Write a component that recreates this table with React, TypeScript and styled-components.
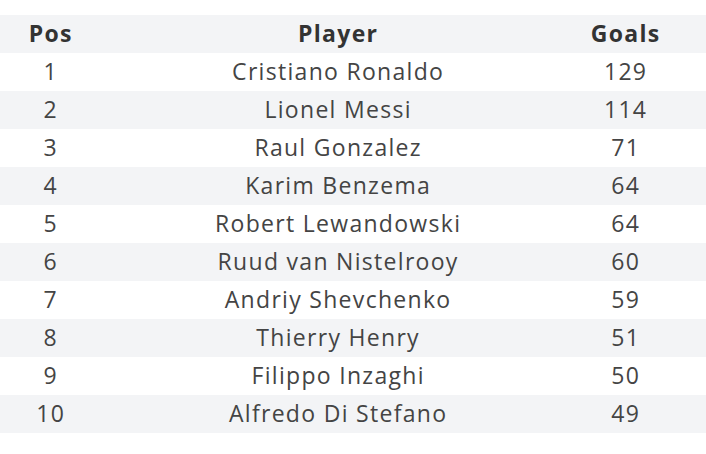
import React from "react";
import styled, { createGlobalStyle } from "styled-components";

const Global = createGlobalStyle`
  html, body { margin: 0; padding: 0; background: #ffffff; }
  body { font-family: "Open Sans", "Liberation Sans", sans-serif; }
`;

const Page = styled.div`
  padding-top: 15px;
  width: 706px;
`;

const Table = styled.div`
  display: flex;
  flex-direction: column;
`;

const Row = styled.div<{ $shade: boolean }>`
  display: grid;
  grid-template-columns: 100px 475px 100px 1fr;
  height: 38px;
  align-items: center;
  background: ${(p) => (p.$shade ? "#f3f4f6" : "#ffffff")};
`;

const Cell = styled.div<{ $head?: boolean }>`
  text-align: center;
  font-size: 23px;
  line-height: 36px;
  padding-bottom: 2px;
  padding-left: 1.3px;
  letter-spacing: 1.3px;
  white-space: nowrap;
  color: ${(p) => (p.$head ? "#333333" : "#444444")};
  font-weight: ${(p) => (p.$head ? 700 : 400)};
`;

const data: [number, string, number][] = [
  [1, "Cristiano Ronaldo", 129],
  [2, "Lionel Messi", 114],
  [3, "Raul Gonzalez", 71],
  [4, "Karim Benzema", 64],
  [5, "Robert Lewandowski", 64],
  [6, "Ruud van Nistelrooy", 60],
  [7, "Andriy Shevchenko", 59],
  [8, "Thierry Henry", 51],
  [9, "Filippo Inzaghi", 50],
  [10, "Alfredo Di Stefano", 49],
];

export default function App() {
  return (
    <>
      <Global />
      <Page>
        <Table>
          <Row $shade>
            <Cell $head>Pos</Cell>
            <Cell $head>Player</Cell>
            <Cell $head>Goals</Cell>
            <span />
          </Row>
          {data.map(([pos, name, goals], i) => (
            <Row key={pos} $shade={i % 2 === 1}>
              <Cell>{pos}</Cell>
              <Cell>{name}</Cell>
              <Cell>{goals}</Cell>
              <span />
            </Row>
          ))}
        </Table>
      </Page>
    </>
  );
}
